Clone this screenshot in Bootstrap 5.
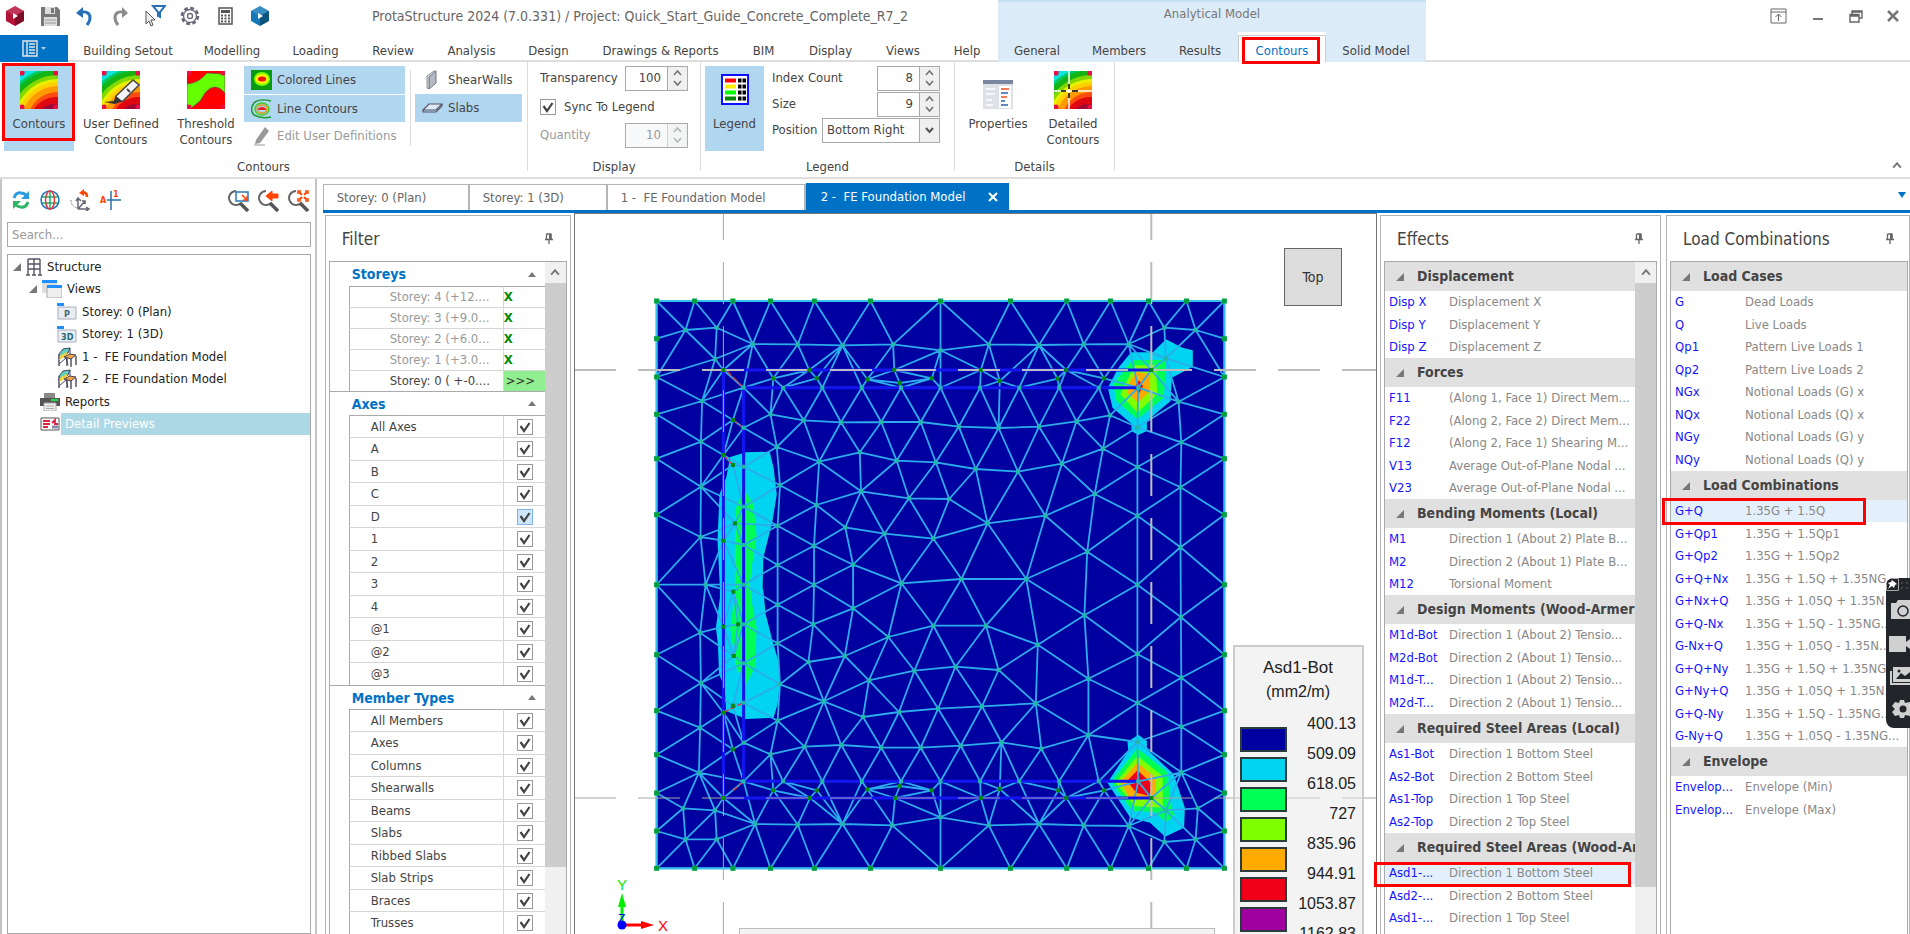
<!DOCTYPE html>
<html lang="en">
<head>
<meta charset="utf-8">
<meta name="viewport" content="width=device-width, initial-scale=1">
<title>ProtaStructure 2024</title>
<link href="https://cdn.jsdelivr.net/npm/bootstrap@5.3.0/dist/css/bootstrap.min.css" rel="stylesheet">
<style>
  :root { --line:#b4b4b4; --accent:#0072c6; --pick:#b1d6f0; --ink:#444; }
  html, body { height:100%; }
  body { font-family:"DejaVu Sans Condensed","DejaVu Sans",sans-serif; font-size:13px; line-height:16px; color:var(--ink); background:#fff; overflow:hidden; }
  button { font:inherit; color:inherit; background:none; border:0; padding:0; white-space:nowrap; }
  svg { display:block; flex:none; }
  .mark-box { position:absolute; border:3px solid #f00; pointer-events:none; z-index:5; }

  /* title bar and ribbon tabs */
  .title-row { height:32px; }
  .quick { width:998px; }
  .quick-icons { gap:11px; padding-left:3px; width:372px; }
  .quick-icons button { width:24px; height:24px; display:grid; place-items:center; }
  .app-title { font-size:14px; color:#666; }
  .context-title { width:428px; background:#dcebf8; border-top:2px solid #c4dff1; color:#777; padding-bottom:6px; }
  .win-buttons { gap:23px; padding-right:9px; }
  .tab-row { height:30px; border-bottom:2px solid #dedede; display:grid; grid-template-columns:68px 120px 88px 79px 76px 81px 73px 151px 55px 79px 66px 62px 78px 86px 76px 88px 100px 1fr; }
  .tab-row button { padding-top:7px; }
  .tab-row .file { background:var(--accent); margin-top:3px; padding:0; height:27px; display:flex; align-items:center; justify-content:center; gap:3px; }
  .tab-row .ctx { background:#dcebf8; }
  .tab-row .current { background:#fff; color:var(--accent); position:relative; margin-top:3px; padding-top:3px; height:27px; border:1px solid #ccc; border-bottom:0; }

  .ribbon { height:117px; border-bottom:2px solid #dedede; }
  .group { border-right:1px solid #dcdcdc; height:109px; padding-top:4px; }
  .group-body { height:85px; }
  .group-name { text-align:center; padding-top:8px; }
  .big { width:70px; height:85px; display:flex; flex-direction:column; align-items:center; padding-top:5px; position:relative; line-height:16px; }
  .big svg { margin-bottom:7px; }
  .picked { background:var(--pick); }
  .row-btn { height:28px; display:flex; align-items:center; gap:5px; padding-left:7px; text-align:left; }
  .off { color:#9a9a9a; }
  .rib-sep { width:1px; height:76px; background:#dcdcdc; margin:4px 4px 0 5px; }
  .field-row { height:24px; display:flex; align-items:center; justify-content:space-between; }
  .field-stack { width:168px; display:flex; flex-direction:column; gap:2px; }
  .spin { width:63px; height:25px; border:1px solid #aaa; display:flex; background:#fff; }
  .spin input { width:41px; border:0; text-align:right; padding:0 6px 0 0; background:none; color:inherit; }
  .spin .arrows { width:21px; border-left:1px solid #aaa; background:#f0f0f0; display:flex; flex-direction:column; align-items:center; justify-content:space-evenly; }
  .pos-select { width:118px; height:25px; border:1px solid #aaa; border-radius:0; padding:0 4px; appearance:none; color:inherit;
    background:linear-gradient(#aaa,#aaa) right 19px top 0/1px 100% no-repeat, url("data:image/svg+xml,%3Csvg xmlns='http://www.w3.org/2000/svg' width='9' height='7'%3E%3Cpath d='M1 1l3.500 4L8 1' fill='none' stroke='%23555' stroke-width='2'/%3E%3C/svg%3E") right 5px center no-repeat, linear-gradient(#f0f0f0,#f0f0f0) right/19px 100% no-repeat; }
  .tick { appearance:none; width:16px; height:16px; margin:0; border:1px solid #999; background:#fff url("data:image/svg+xml,%3Csvg xmlns='http://www.w3.org/2000/svg' width='14' height='14'%3E%3Cpath d='M2.500 6l3.500 5L11.500 3' fill='none' stroke='%23444' stroke-width='2.200'/%3E%3C/svg%3E") center no-repeat; display:block; }
  .tick.hot { background-color:#cde6f9; border-color:#7eb4ea; }

  /* project tree */
  .side { width:317px; border:1px solid #c4c4c4; border-width:0 2px 0 2px; padding:0 4px 0 5px; }
  .side-tools { height:43px; padding:0 1px 2px 5px; }
  .side-left { gap:10px; } .side-right { gap:8px; }
  .search { height:25px; border:1px solid #aaa; border-radius:0; padding:0 4px; width:100%; }
  .search::placeholder { color:#999; }
  .tree { border:1px solid #aaa; margin-top:7px; }
  .tree ul { list-style:none; margin:0; padding:0; }
  .tree li > div { height:23px; display:flex; align-items:center; gap:5px; color:#222; white-space:nowrap; }
  .tree li:nth-child(2n) > div { height:22px; }
  .lvl1 { padding-left:5px; } .lvl2 { padding-left:21px; } .lvl3 { padding-left:49px; }
  .chosen span { background:#add8e6; color:#fff; flex:1; align-self:stretch; line-height:22px; margin-left:-4px; padding-left:4px; }

  /* document area */
  .docs { margin-left:6px; min-width:0; }
  .doc-tabs { height:34px; padding-top:5px; border-bottom:3px solid var(--accent); }
  .doc-tabs button { border:1px solid var(--line); border-width:1px 2px 0 0; text-align:left; padding-left:13px; height:26px; color:#666; }
  .doc-tabs button:first-child { border-left-width:1px; }
  .doc-tabs .open { background:var(--accent); color:#fff; width:203px; border:0; height:28px; margin-top:-1px; padding:0 10px 0 15px; display:flex; align-items:center; justify-content:space-between; }
  .panes { min-height:0; padding:2px 0 0 2px; }
  .pane { border:1px solid var(--line); border-bottom:0; padding:0 3px; min-height:0; flex:none; }
  .pane-head { height:45px; font-size:17px; padding:0 13px; }
  .pane-grid { border:1px solid #aaa; border-bottom:0; min-height:0; overflow:hidden; }
  .pane-body { min-width:0; }
  .scrollbar { width:21px; background:#f0f0f0; display:flex; flex-direction:column; flex:none; }
  .scrollbar i { height:21px; display:grid; place-items:center; }
  .scrollbar b { background:#cdcdcd; display:block; }
  .filter { width:246px; } .effects { width:281px; margin-left:3px; } .loads { width:244px; margin-left:5px; padding-right:1px; }
  .filter .scrollbar b { height:584px; } .effects .scrollbar b { height:604px; }
  .filter h3 { font-size:14px; font-weight:bold; color:#0072c6; margin:0; height:24px; line-height:24px; padding:0 9px 0 22px; display:flex; justify-content:space-between; align-items:center; }
  .filter table { width:197px; margin-left:19px; border-collapse:separate; border-spacing:0; table-layout:fixed; }
  .filter td, .filter th { padding:0; height:22px; border-top:1px solid #d6d6d6; font-weight:normal; white-space:nowrap; line-height:16px; }
  .filter tr:nth-child(even) > * { height:23px; }
  .filter tr:first-child > * { border-top-color:#aaa; }
  .filter th { border-left:1px solid #aaa; padding-left:21px; text-align:left; }
  .filter td { border-left:1px solid #d6d6d6; width:43px; }
  .filter td .tick { margin:0 auto; }
  .filter .storeys tr > * { height:21px; }
  .filter .storeys th { padding-left:40px; color:#999; }
  .filter .storeys td { color:#008a00; font-weight:bold; }
  .filter .storeys tr:last-child th { color:var(--ink); }
  .filter .storeys tr:last-child td { background:#90ee90; color:#333; font-weight:normal; padding-left:2px; }
  .filter .rule { border-top:1px solid #aaa; }
  .cases h3 { font-size:14px; font-weight:bold; color:var(--ink); background:#e0e0e0; margin:0; height:29px; display:flex; align-items:center; gap:13px; padding-left:11px; white-space:nowrap; overflow:hidden; }
  .cases table { width:100%; table-layout:fixed; border-spacing:0; border-collapse:separate; }
  .cases td, .cases th { padding:0 0 0 4px; height:22px; font-weight:normal; white-space:nowrap; overflow:hidden; color:#888; text-align:left; }
  .cases th { color:#1414ff; width:60px; }
  .loads .cases th { width:70px; }
  .cases tr:nth-child(even) > * { height:23px; }
  .cases .on > * { background:#e3f0fb; }
  .pick-effect { left:-10px; right:26px; top:601px; height:25px; }
  .pick-load { left:-8px; width:204px; top:237px; height:27px; }

  /* model view */
  .view { border:1px solid #777; border-bottom:0; margin-left:3px; margin-top:-2px; min-width:0; overflow:hidden; }
  .cube { position:absolute; right:34px; top:34px; width:58px; height:58px; background:#dcdcdc; border:1px solid #666; color:#333; font-size:14px; }
  .legend-box { position:absolute; right:12px; top:431px; width:131px; height:330px; border:2px solid #ccc; background:rgba(232,232,232,.5); font-family:"Liberation Sans",Arial,sans-serif; font-size:16px; color:#222; text-align:center; padding:9px 6px 0 5px; }
  .legend-box div { line-height:24px; }
  .legend-box .legend-name { font-size:17px; }
  .legend-box ul { list-style:none; margin:9px 0 0; padding:0; }
  .legend-box li { height:30px; text-align:right; line-height:22px; position:relative; }
  .legend-box li i { position:absolute; left:0; top:14px; width:47px; height:25px; border:2px solid #2b3b3b; }
  .status-strip { position:absolute; left:164px; right:161px; bottom:0; height:6px; background:#f3f3f3; border:1px solid #bbb; border-bottom:0; }
  .recorder { position:absolute; right:0; top:578px; width:24px; height:150px; background:#22262b; border-radius:8px 0 0 8px; overflow:hidden; z-index:6; }
</style>
</head>
<body class="d-flex flex-column">

<svg width="0" height="0" class="position-absolute" aria-hidden="true">
  <defs>
    <symbol id="heat" viewBox="0 0 38 38">
      <rect width="38" height="38" fill="#20c8f8"/>
      <circle cx="38" cy="52" r="60" fill="#08e8e0"/><circle cx="38" cy="52" r="56" fill="#00c860"/><circle cx="38" cy="52" r="53" fill="#14b414"/>
      <circle cx="38" cy="52" r="48" fill="#80d800"/><circle cx="38" cy="52" r="44" fill="#e8f000"/><circle cx="38" cy="52" r="41" fill="#ffd000"/>
      <circle cx="38" cy="52" r="37" fill="#ff9a00"/><circle cx="38" cy="52" r="31" fill="#ff4a10"/><circle cx="36" cy="52" r="26" fill="#e00810"/><circle cx="34" cy="50" r="17" fill="#a00838"/>
      <g fill="#e81040"><circle cx="2" cy="2" r="2.600"/><circle cx="36" cy="2" r="2.600"/><circle cx="2" cy="36" r="2.600"/><circle cx="36" cy="36" r="2.600"/></g>
    </symbol>
    <symbol id="pin" viewBox="0 0 10 11"><path d="M2.500 1h5M2.500 1v5M7 1v5M1 6.500h8M5 6.500V11" fill="none" stroke="#666" stroke-width="1.300"/><path d="M5 1h2.500v5H5z" fill="#666"/></symbol>
    <symbol id="up" viewBox="0 0 9 6"><path d="M1 5l3.500-4L8 5" fill="none" stroke="#777" stroke-width="1.700"/></symbol>
    <symbol id="down" viewBox="0 0 9 6"><path d="M1 1l3.500 4L8 1" fill="none" stroke="#777" stroke-width="1.700"/></symbol>
    <symbol id="tri" viewBox="0 0 8 8"><path d="M8 0v8H0z" fill="#777"/></symbol>
    <symbol id="fold" viewBox="0 0 8 5"><path d="M4 0l4 5H0z" fill="#777"/></symbol>
    <symbol id="lens" viewBox="0 0 22 24"><path d="M8 3A7 7 0 1 0 13 15" fill="none" stroke="#666" stroke-width="2"/><path d="M12 15l8 8" stroke="#555" stroke-width="3.500"/></symbol>
    <symbol id="fe" viewBox="0 0 20 20"><path d="M2 10v9M10 9v10M14 12v8M19 9v9" stroke="#556" stroke-width="1.500"/><path d="M2 7l4-5 7-1-2 5-9 4z" fill="#60d0c0" stroke="#446"/><path d="M2 9l8-4v4l-8 4z" fill="#f0d040"/><path d="M7 10l6-3 6 1-5 4z" fill="#f6a040" stroke="#446"/><path d="M2 17l7-6 2 7M13 1v6M2 7v5" stroke="#446" fill="none"/></symbol>
    <symbol id="hexagon" viewBox="0 0 18 20"><path d="M9 0l9 5v10l-9 5-9-5V5z" fill="currentColor"/><path d="M9 0l9 5-9 5-9-5z" fill="#fff" opacity=".15"/><path d="M9 10v10l9-5V5z" fill="#000" opacity=".3"/><path d="M7 7l5 3-5 3z" fill="#fff"/></symbol>
  </defs>
</svg>

<header>
  <div class="title-row d-flex">
    <div class="quick d-flex align-items-center">
      <div class="quick-icons d-flex">
        <button aria-label="Application"><svg width="18" height="20" style="color:#b5123a"><use href="#hexagon"/></svg></button>
        <button aria-label="Save"><svg width="19" height="19" viewBox="0 0 19 19"><path d="M0 0h16l3 3v16H0z" fill="#777"/><path d="M4 0h10v7H4zM3 10h13v9H3z" fill="#ddd"/><path d="M10 1h3v5h-3z" fill="#777"/><path d="M4 13h11M4 16h11" stroke="#999"/></svg></button>
        <button aria-label="Undo"><svg width="18" height="20" viewBox="0 0 18 20"><path d="M5 6q9-1 9 6 0 3-3 7" fill="none" stroke="#2a70b8" stroke-width="3"/><path d="M0 7l7-6v11z" fill="#2a70b8"/></svg></button>
        <button aria-label="Redo"><svg width="18" height="20" viewBox="0 0 18 20"><path d="M12 6Q4 5 4 12q0 3 3 7" fill="none" stroke="#8a8a8a" stroke-width="3"/><path d="M17 7l-6-6v11z" fill="#8a8a8a"/></svg></button>
        <button aria-label="Select filter"><svg width="22" height="22" viewBox="0 0 22 22"><path d="M2 6v13l3-3 2 5 2-1-2-5h4z" fill="#eee" stroke="#555"/><path d="M9 1h12l-5 6v5l-2-1V7z" fill="#fff" stroke="#2a70b8" stroke-width="2"/></svg></button>
        <button aria-label="Settings"><svg width="20" height="20" viewBox="0 0 20 20"><circle cx="10" cy="10" r="8" fill="none" stroke="#667" stroke-width="2.500" stroke-dasharray="3.800 2.480"/><circle cx="10" cy="10" r="6.500" fill="#fff" stroke="#667" stroke-width="1.300"/><circle cx="10" cy="10" r="2.500" fill="none" stroke="#667" stroke-width="1.300"/></svg></button>
        <button aria-label="Calculator"><svg width="15" height="18" viewBox="0 0 15 18"><rect x="1" y="1" width="13" height="16" fill="#fff" stroke="#555" stroke-width="1.500"/><path d="M3 4.500h9" stroke="#555" stroke-width="3"/><path d="M3 8.500h9M3 11.500h9M3 14.500h9" stroke="#555" stroke-width="2" stroke-dasharray="2 1.500"/></svg></button>
        <button aria-label="Prota details"><svg width="18" height="20" style="color:#1478b8"><use href="#hexagon"/></svg></button>
      </div>
      <div class="app-title text-nowrap">ProtaStructure 2024 (7.0.331) / Project: Quick_Start_Guide_Concrete_Complete_R7_2</div>
    </div>
    <div class="context-title d-flex align-items-center justify-content-center">Analytical Model</div>
    <div class="win-buttons d-flex align-items-center ms-auto">
      <button aria-label="Full screen"><svg width="17" height="16" viewBox="0 0 17 16"><path d="M1 1h15v14H1zM1 4h15M8.500 13V6M5.500 9l3-3 3 3" fill="none" stroke="#666"/></svg></button>
      <button aria-label="Minimise"><svg width="16" height="14" viewBox="0 0 16 14"><path d="M3 10h10" stroke="#777" stroke-width="2"/></svg></button>
      <button aria-label="Restore"><svg width="14" height="13" viewBox="0 0 14 13"><path d="M3 4V1h10v7h-3M1 4.500h9V12H1zM1 6h9M3 2h10" fill="none" stroke="#666" stroke-width="1.400"/></svg></button>
      <button aria-label="Close"><svg width="15" height="12" viewBox="0 0 15 12"><path d="M2 1l10 10M12 1L2 11" stroke="#777" stroke-width="2.500"/></svg></button>
    </div>
  </div>
  <nav class="tab-row">
    <button class="file" aria-label="File"><svg width="16" height="17" viewBox="0 0 16 17"><path d="M1 1h14v15H1zM5 1v15M7 4h6M7 7h6M7 10h6M7 13h6" fill="none" stroke="#e8e8e8" stroke-width="1.400"/></svg><svg width="5" height="4" viewBox="0 0 5 4"><path d="M0 0h5L2.500 3z" fill="#bcd"/></svg></button>
    <button>Building Setout</button><button>Modelling</button><button>Loading</button><button>Review</button><button>Analysis</button><button>Design</button><button>Drawings &amp; Reports</button><button>BIM</button><button>Display</button><button>Views</button><button>Help</button>
    <button class="ctx">General</button><button class="ctx">Members</button><button class="ctx">Results</button><button class="current">Contours<span class="mark-box" style="inset:1px 5px -2px 3px"></span></button><button class="ctx">Solid Model</button>
  </nav>
</header>

<section class="ribbon d-flex position-relative">
  <div class="group" style="width:528px">
    <div class="group-body d-flex ps-1">
      <button class="big picked"><svg width="38" height="38"><use href="#heat"/></svg>Contours<span class="mark-box" style="inset:-3px -1px 10px -2px"></span></button>
      <button class="big" style="width:94px"><svg width="38" height="38"><use href="#heat"/><path d="M14 25L31 9l6 5-16 16-8 1z" fill="#f4f4f4" stroke="#444" stroke-width="1.500"/><path d="M2 31l10-1 2-5 6 5-7 3z" fill="#333"/><path d="M25 18l3 3" stroke="#444" stroke-width="2"/></svg>User Defined<br>Contours</button>
      <button class="big" style="width:76px"><svg width="38" height="38" viewBox="0 0 38 38"><rect width="38" height="38" fill="#f00"/><path d="M0 13Q12 12 20 2L38 3V22Q28 10 18 22L13 30 3 38H0z" fill="#6f0" stroke="#555" stroke-width=".7"/><g fill="#e81040"><circle cx="2" cy="2" r="2.600"/><circle cx="36" cy="2" r="2.600"/><circle cx="2" cy="36" r="2.600"/><circle cx="36" cy="36" r="2.600"/></g></svg>Threshold<br>Contours</button>
      <div class="d-flex flex-column gap-0" style="width:161px">
        <button class="row-btn picked mb-0"><svg width="21" height="20" viewBox="0 0 21 20"><rect width="21" height="20" fill="#0a9a10"/><ellipse cx="11" cy="9" rx="8" ry="7" fill="#7f0"/><ellipse cx="11" cy="9" rx="6.500" ry="5" fill="#fe0"/><ellipse cx="11" cy="9" rx="4" ry="2.500" fill="#e11"/></svg>Colored Lines</button>
        <button class="row-btn picked border-top border-white"><svg width="21" height="20" viewBox="0 0 21 20"><g fill="none" stroke-width="1.500"><path d="M20 2Q8-1 3 4q-5 7 0 12 7 4 17 2" stroke="#1a9a30"/><ellipse cx="11" cy="10" rx="7" ry="6" stroke="#4c2"/><ellipse cx="11" cy="10" rx="5" ry="4" stroke="#d92"/></g><path d="M7 11q0-3 4-3t4 3z" fill="#e22"/></svg>Line Contours</button>
        <button class="row-btn off"><svg width="21" height="20" viewBox="0 0 21 20"><path d="M5 14L14 1l4 4-9 12-5 1z" fill="#999"/><path d="M3 19h11" stroke="#ccc" stroke-width="2"/></svg>Edit User Definitions</button>
      </div>
      <div class="rib-sep"></div>
      <div style="width:107px">
        <button class="row-btn w-100"><svg width="21" height="20" viewBox="0 0 21 20"><path d="M7 7l7-6v12l-7 6z" fill="#b4bac6" stroke="#777"/><path d="M5 6l7-5 2 0-7 6v12l-2-1z" fill="#d8dce4" stroke="#777" stroke-width=".8"/></svg>ShearWalls</button>
        <button class="row-btn w-100 picked"><svg width="21" height="20" viewBox="0 0 21 20"><path d="M1 12L7 6h13l-6 6z" fill="#dfe9f5" stroke="#556" stroke-width="1.200"/><path d="M1 12v2h13l6-6V6" fill="none" stroke="#556" stroke-width="1.200"/></svg>Slabs</button>
      </div>
    </div>
    <div class="group-name">Contours</div>
  </div>
  <div class="group" style="width:173px">
    <div class="group-body d-flex flex-column justify-content-between ps-2 ms-1 pe-2 me-1 pb-1">
      <div class="field-row"><label for="trans">Transparency</label><span class="spin"><input id="trans" value="100"><span class="arrows"><svg width="9" height="6"><use href="#up"/></svg><svg width="9" height="6"><use href="#down"/></svg></span></span></div>
      <div class="d-flex align-items-center gap-2"><input class="tick" type="checkbox" id="sync" checked><label for="sync">Sync To Legend</label></div>
      <div class="field-row off"><label for="qty">Quantity</label><span class="spin bg-light"><input id="qty" value="10" disabled><span class="arrows opacity-50"><svg width="9" height="6"><use href="#up"/></svg><svg width="9" height="6"><use href="#down"/></svg></span></span></div>
    </div>
    <div class="group-name">Display</div>
  </div>
  <div class="group" style="width:254px">
    <div class="group-body d-flex">
      <button class="big picked ms-1 me-2" style="width:59px"><svg width="38" height="38" viewBox="0 0 38 38"><rect x="6" y="4" width="26" height="29" fill="#fff" stroke="#11f" stroke-width="2"/><path d="M9 9.500h11" stroke="red" stroke-width="4"/><path d="M9 15.500h11" stroke="#fe0" stroke-width="4"/><path d="M9 21.500h11" stroke="#0f0" stroke-width="4"/><path d="M9 27.500h11" stroke="#080" stroke-width="4"/><path d="M22 9.500h8M22 15.500h8M22 21.500h8M22 27.500h8" stroke="#000" stroke-width="4" stroke-dasharray="3.500 1"/></svg>Legend</button>
      <div class="field-stack">
        <div class="field-row"><label for="idx">Index Count</label><span class="spin"><input id="idx" value="8"><span class="arrows"><svg width="9" height="6"><use href="#up"/></svg><svg width="9" height="6"><use href="#down"/></svg></span></span></div>
        <div class="field-row"><label for="siz">Size</label><span class="spin"><input id="siz" value="9"><span class="arrows"><svg width="9" height="6"><use href="#up"/></svg><svg width="9" height="6"><use href="#down"/></svg></span></span></div>
        <div class="field-row"><label for="pos">Position</label><select class="pos-select" id="pos"><option>Bottom Right</option></select></div>
      </div>
    </div>
    <div class="group-name">Legend</div>
  </div>
  <div class="group" style="width:160px">
    <div class="group-body d-flex">
      <button class="big" style="width:86px"><svg width="38" height="38" viewBox="0 0 38 38"><path d="M4 9h30v29H4z" fill="#dfe1e8"/><path d="M4 9h30v4H4z" fill="#7a85a0"/><path d="M7 18h9M7 23h9M7 29h6M7 34h7" stroke="#fff" stroke-width="1.500"/><path d="M20 15h12v22H20z" fill="#fff"/><path d="M22 18h8M22 26h6" stroke="#f05020" stroke-width="1.600"/><path d="M22 22h7M22 30h4M22 34h7" stroke="#3060b0" stroke-width="1.600"/></svg>Properties</button>
      <button class="big" style="width:64px"><svg width="38" height="38" viewBox="0 0 38 38"><use href="#heat"/><path d="M15 0v38M0 20h38" stroke="#fff" stroke-width="1.500"/><path d="M15 13v5M15 22v5M7 20h5M18 20h6" stroke="#000" stroke-width="1.500"/></svg>Detailed<br>Contours</button>
    </div>
    <div class="group-name">Details</div>
  </div>
  <button class="ms-auto align-self-end p-2 pb-2 me-0" aria-label="Collapse ribbon"><svg width="10" height="7"><use href="#up"/></svg></button>
</section>

<main class="d-flex flex-grow-1" style="min-height:0">
  <aside class="side d-flex flex-column">
    <div class="side-tools d-flex align-items-center justify-content-between">
      <div class="side-left d-flex align-items-center">
      <svg width="18" height="20" viewBox="0 0 18 20"><path d="M2 8Q4 2 9 3q3 0 5 2" fill="none" stroke="#2d9be0" stroke-width="3"/><path d="M17 1v8h-8z" fill="#2d9be0"/><path d="M16 12q-2 6-7 5-3 0-5-2" fill="none" stroke="#30b468" stroke-width="3"/><path d="M1 19v-8h8z" fill="#30b468"/></svg>
      <svg width="20" height="20" viewBox="0 0 20 20" fill="none" stroke-width="1.500"><path d="M1 7h18M1 13h18M10 1v18" stroke="#2a6"/><circle cx="10" cy="10" r="9" stroke="#1878c0"/><ellipse cx="10" cy="10" rx="4.500" ry="9" stroke="#e33"/></svg>
      <svg width="20" height="22" viewBox="0 0 20 22" fill="none"><path d="M8 20V9M8 20h11M8 20l7-8M6 12l2-3 3 3M16 18l3 2-3 2M12 12h3v3" stroke="#667" stroke-width="1.500"/><path d="M1 11q0 6 6 8" stroke="#888" stroke-dasharray="2 1"/><path d="M12 3q5 0 5 5" stroke="#f40" stroke-width="2.500"/><path d="M9 4l5-4v7z" fill="#f40"/></svg>
      <svg width="22" height="22" viewBox="0 0 22 22"><path d="M11 2v19M7 11h14" stroke="#2a70a8" stroke-width="1.500"/><text x="0" y="14" font-size="9" font-weight="bold" fill="#f40">A</text><text x="13" y="8" font-size="9" font-weight="bold" fill="#f40">1</text></svg>
      </div>
      <div class="side-right d-flex align-items-center">
      <svg width="22" height="24" viewBox="0 0 22 24"><use href="#lens"/><path d="M8 4h12v9H8z" fill="#fff" stroke="#2878b8" stroke-width="1.500"/><path d="M14 7l5 5M19 8v4h-4" stroke="#f40" fill="none" stroke-width="1.500"/></svg>
      <svg width="22" height="24" viewBox="0 0 22 24"><use href="#lens"/><path d="M8 8l6-5v3h6v4h-6v3z" fill="#f40" stroke="#f40"/></svg>
      <svg width="22" height="24" viewBox="0 0 22 24"><use href="#lens"/><path d="M11 4l8 8M19 4l-8 8" stroke="#f40" stroke-width="2" stroke-dasharray="4 3"/><path d="M10 6V3h3M17 3h3v3M20 10v3h-3M13 13h-3v-3" fill="none" stroke="#f40" stroke-width="1.500"/></svg>
      </div>
    </div>
    <input class="search" type="search" placeholder="Search..." aria-label="Search">
    <nav class="tree flex-grow-1">
      <ul>
        <li><div class="lvl1"><svg width="8" height="8"><use href="#tri"/></svg><svg width="16" height="18" viewBox="0 0 16 18"><path d="M2 1h12M2 6h12M2 11h12M2 1v16M8 1v16M14 1v16M0 17h4M6 17h4M12 17h4" stroke="#556" stroke-width="1.400"/></svg><span>Structure</span></div></li>
        <li><div class="lvl2"><svg width="8" height="8"><use href="#tri"/></svg><svg width="20" height="18" viewBox="0 0 20 18"><path d="M0 1h15v12H0z" fill="#ddd"/><path d="M0 0h15v3H0z" fill="#1e90ff"/><path d="M5 6h15v12H5z" fill="#eee" stroke="#aaa"/><path d="M5 5h15v3H5z" fill="#1e90ff"/></svg><span>Views</span></div></li>
        <li><div class="lvl3"><svg width="20" height="17" viewBox="0 0 20 17"><path d="M1 4h18v12H1z" fill="#e8edf2" stroke="#aab"/><path d="M0 0h7v3H0z" fill="#1e90ff"/><text x="7" y="14" font-size="9" font-weight="bold" fill="#467">P</text></svg><span>Storey: 0 (Plan)</span></div></li>
        <li><div class="lvl3"><svg width="20" height="17" viewBox="0 0 20 17"><path d="M1 4h18v12H1z" fill="#e8edf2" stroke="#aab"/><path d="M0 0h7v3H0z" fill="#1e90ff"/><text x="4" y="14" font-size="9" font-weight="bold" fill="#267">3D</text></svg><span>Storey: 1 (3D)</span></div></li>
        <li><div class="lvl3"><svg width="20" height="20"><use href="#fe"/></svg><span>1 -&nbsp; FE Foundation Model</span></div></li>
        <li><div class="lvl3"><svg width="20" height="20"><use href="#fe"/></svg><span>2 -&nbsp; FE Foundation Model</span></div></li>
        <li><div class="lvl2 ps-4 ms-2"><svg width="20" height="18" viewBox="0 0 20 18"><path d="M4 0h11v5H4z" fill="#888"/><path d="M0 5h20v8H0z" fill="#555"/><path d="M11 6h7v2h-7z" fill="#2d4"/><path d="M4 10h12v8H4z" fill="#eee" stroke="#aaa"/><path d="M6 13h8M6 15.500h8" stroke="#aaa"/></svg><span>Reports</span></div></li>
        <li><div class="lvl2 ps-4 ms-2 chosen"><svg width="20" height="14" viewBox="0 0 20 14"><path d="M1 1h18v12H1z" fill="#fff" stroke="#555"/><path d="M3 4h7M3 7h7M3 10h5M12 6l3-3 0 4h3" stroke="#e02040" stroke-width="1.800" fill="none"/><path d="M12 10h6" stroke="#88a" stroke-width="3"/></svg><span>Detail Previews</span></div></li>
      </ul>
    </nav>
  </aside>

  <div class="docs flex-grow-1 d-flex flex-column">
    <div class="doc-tabs d-flex">
      <button style="width:147px">Storey: 0 (Plan)</button><button style="width:138px">Storey: 1 (3D)</button><button style="width:198px">1 -&nbsp; FE Foundation Model</button><button class="open"><span>2 -&nbsp; FE Foundation Model</span><svg width="12" height="10" viewBox="0 0 12 10"><path d="M2 1l8 8M10 1L2 9" stroke="#fff" stroke-width="2"/></svg></button>
      <svg class="ms-auto mt-2 me-1" width="8" height="6" viewBox="0 0 8 6"><path d="M0 0h8L4 6z" fill="#0072c6"/></svg>
    </div>
    <div class="panes d-flex flex-grow-1">
      <section class="pane filter d-flex flex-column">
        <div class="pane-head d-flex align-items-center justify-content-between">Filter<svg width="10" height="11"><use href="#pin"/></svg></div>
        <div class="pane-grid flex-grow-1 d-flex"><div class="pane-body flex-grow-1" id="filterBody"></div><div class="scrollbar"><i><svg width="10" height="7"><use href="#up"/></svg></i><b></b></div></div>
      </section>

      <section class="view flex-grow-1 position-relative">
        <svg id="scene" width="100%" height="720" viewBox="0 0 803 720" preserveAspectRatio="xMinYMin slice"></svg>
        <button class="cube">Top</button>
        <div class="legend-box"><div class="legend-name">Asd1-Bot</div><div>(mm2/m)</div><ul id="legendScale"></ul></div>
        <div class="status-strip"></div>
      </section>

      <section class="pane effects d-flex flex-column">
        <div class="pane-head d-flex align-items-center justify-content-between">Effects<svg width="10" height="11"><use href="#pin"/></svg></div>
        <div class="position-relative flex-grow-1 d-flex flex-column" style="min-height:0">
          <div class="pane-grid flex-grow-1 d-flex"><div class="cases pane-body flex-grow-1" id="effectBody"></div><div class="scrollbar"><i><svg width="10" height="7"><use href="#up"/></svg></i><b></b></div></div>
          <span class="mark-box pick-effect"></span>
        </div>
      </section>

      <section class="pane loads d-flex flex-column">
        <div class="pane-head d-flex align-items-center justify-content-between">Load Combinations<svg width="10" height="11"><use href="#pin"/></svg></div>
        <div class="position-relative flex-grow-1 d-flex flex-column" style="min-height:0">
          <div class="pane-grid flex-grow-1"><div class="cases" id="loadBody"></div></div>
          <span class="mark-box pick-load"></span>
        </div>
      </section>
    </div>
  </div>
</main>

<div class="recorder" aria-hidden="true">
  <svg width="24" height="150" viewBox="0 0 24 150"><path d="M.5 .5h12v12H.5z" fill="#22262b" stroke="#aaa"/><path d="M6 2l5 4-2 1-1 3-2-2-4 3 2-4-2-2 3-1z" fill="#fff"/><path d="M15 4h2v2h-2zM20 4h2v2h-2zM15 9h2v2h-2zM20 9h2v2h-2z" fill="#444"/>
  <g fill="#d0d0d0"><path d="M5 25h5l2-3h12v19H5z"/><path d="M3 58h17v6l4-3v10l-4-3v6H3z"/><path d="M7 89h17v15H7z"/><path d="M24 106H5V93" fill="none" stroke="#d0d0d0" stroke-width="2"/><path d="M14 122h4l1 3 5-1v14l-5-1-1 3h-4l-1-3-4 1-3-4 3-3-3-3 3-4 4 1z"/></g>
  <circle cx="17" cy="33" r="5" fill="none" stroke="#22262b" stroke-width="1.500"/><path d="M10 101l5-6 4 3 5-4v7z" fill="#22262b"/><circle cx="13" cy="93" r="1.500" fill="#22262b"/><circle cx="17" cy="131" r="3.500" fill="#22262b"/></svg>
</div>

<script src="https://cdn.jsdelivr.net/npm/bootstrap@5.3.0/dist/js/bootstrap.bundle.min.js"></script>
<script>
  // ---- filter panel
  const fold = '<svg width="8" height="5"><use href="#fold"/></svg>';
  const tickRows = (names, key) => '<table><tbody>' + names.map((n, i) =>
    `<tr><th scope="row"><label for="${key}${i}">${n}</label></th><td><input class="tick${n === 'D' ? ' hot' : ''}" type="checkbox" id="${key}${i}" checked></td></tr>`).join('') + '</tbody></table>';
  const storeys = [['Storey: 4 (+12....', 'X'], ['Storey: 3 (+9.0...', 'X'], ['Storey: 2 (+6.0...', 'X'], ['Storey: 1 (+3.0...', 'X'], ['Storey: 0 ( +-0....', '&gt;&gt;&gt;']];
  document.getElementById('filterBody').innerHTML =
    `<h3>Storeys${fold}</h3><table class="storeys"><tbody>${storeys.map(s => `<tr><th scope="row">${s[0]}</th><td>${s[1]}</td></tr>`).join('')}</tbody></table>` +
    `<h3 class="rule">Axes${fold}</h3>` + tickRows(['All Axes', 'A', 'B', 'C', 'D', '1', '2', '3', '4', '@1', '@2', '@3'], 'ax') +
    `<h3 class="rule">Member Types${fold}</h3>` + tickRows(['All Members', 'Axes', 'Columns', 'Shearwalls', 'Beams', 'Slabs', 'Ribbed Slabs', 'Slab Strips', 'Braces', 'Trusses'], 'mt');

  // ---- effect and load lists
  const fillCases = (id, groups, on) => {
    document.getElementById(id).innerHTML = groups.map(([title, rows]) =>
      `<h3><svg width="8" height="8"><use href="#tri"/></svg>${title}</h3><table><tbody>` +
      rows.map((r, i) => `<tr class="${title === on[0] && i === on[1] ? 'on' : ''}"><th scope="row">${r[0]}</th><td>${r[1]}</td></tr>`).join('') + '</tbody></table>').join('');
  };
  fillCases('effectBody', [
    ['Displacement', [['Disp X', 'Displacement X'], ['Disp Y', 'Displacement Y'], ['Disp Z', 'Displacement Z']]],
    ['Forces', [['F11', '(Along 1, Face 1) Direct Mem...'], ['F22', '(Along 2, Face 2) Direct Mem...'], ['F12', '(Along 2, Face 1) Shearing M...'], ['V13', 'Average Out-of-Plane Nodal ...'], ['V23', 'Average Out-of-Plane Nodal ...']]],
    ['Bending Moments (Local)', [['M1', 'Direction 1 (About 2) Plate B...'], ['M2', 'Direction 2 (About 1) Plate B...'], ['M12', 'Torsional Moment']]],
    ['Design Moments (Wood-Armer', [['M1d-Bot', 'Direction 1 (About 2) Tensio...'], ['M2d-Bot', 'Direction 2 (About 1) Tensio...'], ['M1d-T...', 'Direction 1 (About 2) Tensio...'], ['M2d-T...', 'Direction 2 (About 1) Tensio...']]],
    ['Required Steel Areas (Local)', [['As1-Bot', 'Direction 1 Bottom Steel'], ['As2-Bot', 'Direction 2 Bottom Steel'], ['As1-Top', 'Direction 1 Top Steel'], ['As2-Top', 'Direction 2 Top Steel']]],
    ['Required Steel Areas (Wood-Ar', [['Asd1-...', 'Direction 1 Bottom Steel'], ['Asd2-...', 'Direction 2 Bottom Steel'], ['Asd1-...', 'Direction 1 Top Steel']]]
  ], ['Required Steel Areas (Wood-Ar', 0]);
  fillCases('loadBody', [
    ['Load Cases', [['G', 'Dead Loads'], ['Q', 'Live Loads'], ['Qp1', 'Pattern Live Loads 1'], ['Qp2', 'Pattern Live Loads 2'], ['NGx', 'Notional Loads (G) x'], ['NQx', 'Notional Loads (Q) x'], ['NGy', 'Notional Loads (G) y'], ['NQy', 'Notional Loads (Q) y']]],
    ['Load Combinations', [['G+Q', '1.35G + 1.5Q'], ['G+Qp1', '1.35G + 1.5Qp1'], ['G+Qp2', '1.35G + 1.5Qp2'], ['G+Q+Nx', '1.35G + 1.5Q + 1.35NG...'], ['G+Nx+Q', '1.35G + 1.05Q + 1.35N...'], ['G+Q-Nx', '1.35G + 1.5Q - 1.35NG...'], ['G-Nx+Q', '1.35G + 1.05Q - 1.35N...'], ['G+Q+Ny', '1.35G + 1.5Q + 1.35NG...'], ['G+Ny+Q', '1.35G + 1.05Q + 1.35N...'], ['G+Q-Ny', '1.35G + 1.5Q - 1.35NG...'], ['G-Ny+Q', '1.35G + 1.05Q - 1.35NG...']]],
    ['Envelope', [['Envelop...', 'Envelope (Min)'], ['Envelop...', 'Envelope (Max)']]]
  ], ['Load Combinations', 0]);

  // ---- colour scale
  const scale = [['400.13', '#0000a0'], ['509.09', '#00d4f0'], ['618.05', '#00ff55'], ['727', '#80ff00'], ['835.96', '#ffaa00'], ['944.91', '#f00018'], ['1053.87', '#a000a0'], ['1162.83', '#a000a0']];
  document.getElementById('legendScale').innerHTML = scale.map(([v, c]) => `<li><i style="background:${c}"></i>${v}</li>`).join('');

  // ---- finite element mesh: slab nodes in model units, y measured from the upper or the middle datum
  const edgeX = [42,138,235,330,441,583,760,937,1079,1190,1286,1382,1478];
  const wallX = [262,362,461,561,660,760,860,959,1060,1160,1260];
  const upper = [
    [115,327],[194,320],[285,369],[399,370],[512,373],[640,370],[760,388],[882,370],[1009,372],[1122,370],[1236,369],[1326,320],[1405,327],
    [190,414],[1330,412],[157,540],[154,662],[154,797],[153,948],[166,1091],
    [330,580],[414,598],[508,604],[610,603],[710,603],[806,617],[907,621],[1009,617],[1104,601],[1189,583],[1258,619],
    [346,678],[453,722],[556,694],[649,719],[748,724],[849,744],[956,752],[1067,728],[1171,683],
    [354,793],[559,811],[680,832],[782,834],[1150,819],[1258,738],[446,852],[348,914],[519,919],[618,938],[879,907],[742,953],[1025,884],[1258,884],
    [440,974],[348,1032],[539,1031],[440,1091],[661,1087],[813,1074],[977,1074],[1131,992],[1258,1091],[1362,542],[1369,664],[1367,799],[1367,979],
    [262,620],[262,737],[262,857],[262,972],[262,1091]];
  const upperDots = [[211,447],[428,447],[643,447],[862,447],[1078,447],[1293,447],[337,472],[447,472],[575,475],[657,486],[738,472],[910,480],[1056,473],[1174,472],
    [235,597],[235,732],[240,907],[236,1112],[211,702],[211,959]];
  const lower = [
    [348,131],[348,247],[354,370],[348,479],[330,580],[438,190],[539,142],[628,228],[742,194],[875,194],[1006,251],[1124,163],[1368,168],[1258,279],
    [426,303],[518,285],[579,358],[694,329],[798,317],[907,327],[1134,353],[1369,350],[1258,426],[465,421],[564,468],[655,453],[754,443],[865,436],[1001,427],
    [1369,497],[1134,522],[1258,543],[416,557],[509,552],[610,560],[710,560],[811,554],[914,544],[1015,563],[1369,634],[152,215],[154,366],[152,500],[149,635],
    [109,742],[190,748],[115,835],[194,835],[291,789],[399,791],[512,789],[638,793],[760,769],[882,793],[1009,789],[1122,793],[1236,795],[1330,748],[1411,742],[1326,843],[1405,835],
    [262,190],[262,307],[262,425],[262,545]];
  const lowerDots = [[248,190],[237,285],[235,434],[235,565],[211,197],[211,455],[211,711],[430,711],[645,711],[862,711],[1078,711],[1293,711],
    [337,688],[447,688],[575,685],[657,675],[738,688],[910,684],[1058,688],[1174,688]];
  const up = ([x, y]) => [65 + x / 2.529, 7 + y / 3];
  const lo = ([x, y]) => [65 + x / 2.529, 347 + y / 3];
  const rim = [
    ...edgeX.map(x => up([x, 240])), ...edgeX.map(x => lo([x, 922])),
    ...[42, 1478].flatMap(x => [...[353,468,580,713,881,1091].map(y => up([x, y])), ...[281,449,581,696,810].map(y => lo([x, y]))])];
  const inner = [...upper.map(up), ...lower.map(lo), ...wallX.map(x => up([x, 500])), ...wallX.map(x => lo([x, 661]))];
  const dots = [...upperDots.map(up), ...lowerDots.map(lo)];
  const pts = [...rim, ...inner, ...dots];

  // incremental Delaunay triangulation
  function triangulate(p) {
    const n = p.length, all = [...p, [-9000, -8000], [9900, -8100], [400, 12000]];
    const make = (a, b, c) => {
      const [ax, ay] = all[a], [bx, by] = all[b], [cx, cy] = all[c];
      const d = 2 * (ax * (by - cy) + bx * (cy - ay) + cx * (ay - by));
      const A = ax * ax + ay * ay, B = bx * bx + by * by, C = cx * cx + cy * cy;
      const x = (A * (by - cy) + B * (cy - ay) + C * (ay - by)) / d, y = (A * (cx - bx) + B * (ax - cx) + C * (bx - ax)) / d;
      return { v: [a, b, c], x, y, r: (ax - x) ** 2 + (ay - y) ** 2 };
    };
    let tris = [make(n, n + 1, n + 2)];
    for (let i = 0; i < n; i++) {
      const edges = new Map(), keep = [];
      for (const t of tris) {
        if ((all[i][0] - t.x) ** 2 + (all[i][1] - t.y) ** 2 < t.r - 1e-6) {
          for (let k = 0; k < 3; k++) {
            const a = t.v[k], b = t.v[(k + 1) % 3], key = Math.min(a, b) + '_' + Math.max(a, b);
            edges.has(key) ? edges.delete(key) : edges.set(key, [a, b]);
          }
        } else keep.push(t);
      }
      for (const [a, b] of edges.values()) {
        const cr = (all[a][0] - all[i][0]) * (all[b][1] - all[i][1]) - (all[a][1] - all[i][1]) * (all[b][0] - all[i][0]);
        if (Math.abs(cr) > 1e-6) keep.push(make(a, b, i));
      }
      tris = keep;
    }
    return tris.filter(t => t.v.every(v => v < n));
  }
  const f = v => Math.round(v * 10) / 10;
  const seen = new Set(); let mesh = '';
  for (const t of triangulate(pts)) for (let k = 0; k < 3; k++) {
    const a = Math.min(t.v[k], t.v[(k + 1) % 3]), b = Math.max(t.v[k], t.v[(k + 1) % 3]), key = a + '_' + b;
    if (!seen.has(key)) { seen.add(key); mesh += `M${f(pts[a][0])} ${f(pts[a][1])}L${f(pts[b][0])} ${f(pts[b][1])}`; }
  }
  const poly = (pin, fill) => `<polygon fill="${fill}" points="${pin.map(q => q.map(f).join()).join(' ')}"/>`;
  const cy = '#00d4f0', gr = '#00ff55', li = '#80ff00', or = '#ffaa00', re = '#f00018';
  const bands =
    poly([[242,394],[297,394],[330,355],[372,380],[398,388],[398,437],[345,470],[342,540],[282,600],[282,630],[260,642],[243,630],[243,608],[195,560],[183,500],[210,440]].map(([x, y]) => up([x + 1000, y])), cy) +
    poly([[1245,417],[1330,417],[1325,530],[1258,595],[1205,540],[1197,490]].map(up), gr) +
    poly([[1250,433],[1305,433],[1308,520],[1258,575],[1215,520]].map(up), li) +
    poly([[1255,452],[1290,460],[1290,510],[1260,545],[1232,515],[1240,480]].map(up), or) +
    poly([[1262,478],[1272,495],[1262,518],[1250,500]].map(up), re) +
    poly([[1260,521],[1282,540],[1282,565],[1350,640],[1378,740],[1376,800],[1328,827],[1290,785],[1240,770],[1182,665],[1235,570],[1233,543]].map(lo), cy) +
    poly([[1258,562],[1335,635],[1340,720],[1352,765],[1330,782],[1300,752],[1245,750],[1192,662]].map(lo), gr) +
    poly([[1258,585],[1322,645],[1322,740],[1250,735],[1202,665]].map(lo), li) +
    poly([[1258,605],[1305,650],[1305,715],[1240,715],[1215,662]].map(lo), or) +
    poly([[1258,628],[1292,665],[1290,705],[1255,695],[1232,660]].map(lo), re) +
    poly([...[[228,708],[268,694],[328,692],[338,740],[346,820],[335,900],[312,1010],[310,1100]].map(up), ...[[312,90],[318,160],[335,240],[350,300],[354,370],[348,430],[338,470],[268,474],[218,450],[214,380],[200,340],[197,250],[192,200],[202,110]].map(lo), ...[[202,1100],[196,960],[201,820],[218,770]].map(up)], cy) +
    poly([...[[262,805],[287,850],[295,950],[282,1040],[278,1090]].map(up), ...[[282,120],[295,200],[290,320],[268,370],[243,320],[228,200],[240,100]].map(lo), ...[[240,960],[243,860]].map(up)], gr);
  const sq = (q, s, c) => `<rect x="${f(q[0] - s / 2)}" y="${f(q[1] - s / 2)}" width="${s}" height="${s}" fill="${c}"/>`;
  const P = (fn, x, y) => fn([x, y]).map(f).join(' ');
  const [x0, y0] = up([42, 240]), [x1, y1] = lo([1478, 922]);
  const [gx0, gy0] = up([211, 447]), [gx1, gy1] = lo([1293, 711]);
  document.getElementById('scene').innerHTML =
    `<rect x="${x0}" y="${y0}" width="${x1 - x0}" height="${y1 - y0}" fill="#0000a0"/>` + bands +
    `<path d="${mesh}" stroke="#2cacec" stroke-width="1.800" fill="none"/>` +
    `<rect x="${x0}" y="${y0}" width="${x1 - x0}" height="${y1 - y0}" fill="none" stroke="#35c0f0" stroke-width="2"/>` +
    `<path d="M${P(up,262,500)}H${f(up([1260,0])[0])}M${P(up,262,500)}L${P(lo,262,661)}H${f(up([1260,0])[0])}M${f(gx0)} ${f(gy0)}H${f(gx1)}M${f(gx0)} ${f(gy0)}V${f(gy1)}H${f(gx1)}" fill="none" stroke="#1414f0" stroke-width="3"/>` +
    `<path d="M${P(up,220,450)}L${P(up,262,500)}M${P(up,235,597)}L${P(up,262,620)}M${P(up,211,702)}L${P(up,235,732)}M${P(lo,211,455)}L${P(lo,262,425)}M${P(lo,235,690)}L${P(lo,262,661)}" stroke="#e03030" stroke-width="1.300" stroke-dasharray="6 2"/>` +
    `<g stroke="#a8a8a8" stroke-dasharray="42 22" fill="none"><path d="M${f(gx0)} -16V720"/><path d="M-1 ${f(gy1)}H803"/></g>` +
    `<g stroke="#bcbcbc" stroke-width="2" stroke-dasharray="42 22" fill="none"><path d="M${f(gx1)} -16V720"/><path d="M-1 ${f(gy0)}H803"/></g>` +
    rim.map(q => sq(q, 5, '#00a040')).join('') + inner.map(q => sq(q, 4, '#22b8a8')).join('') + dots.map(q => sq(q, 4, '#008a10')).join('') +
    `<g font-family="Liberation Sans, Arial, sans-serif" font-size="15"><path d="M47 711V690" stroke="#0e0" stroke-width="3"/><path d="M47 679l4 14h-8z" fill="#0e0"/><path d="M47 711h21" stroke="red" stroke-width="3"/><path d="M79 711l-13-4v8z" fill="red"/><text x="42" y="676" fill="#0e0">Y</text><text x="83" y="717" fill="red">X</text><text x="43" y="709" font-size="12" fill="#00f">Z</text><circle cx="47" cy="711" r="4.500" fill="#00f"/></g>`;
</script>
</body>
</html>
